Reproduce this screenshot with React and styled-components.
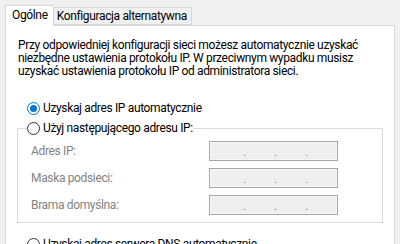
import React from "react";
import styled, { createGlobalStyle } from "styled-components";

const Global = createGlobalStyle`
  html, body { margin: 0; padding: 0; background: #f0f0f0; }
  body { font-family: Roboto, "Noto Sans", sans-serif; font-size: 12px; letter-spacing: -0.35px; color: #000; }
`;

const Dialog = styled.div`
  width: 400px;
  height: 244px;
  overflow: hidden;
  padding: 4px 5px 0 5px;
  box-sizing: border-box;
`;

const TabRow = styled.div`
  display: flex;
  align-items: flex-end;
  height: 21px;
  position: relative;
  z-index: 1;
`;

const Tab = styled.div`
  box-sizing: border-box;
  display: flex;
  align-items: center;
  border: 1px solid #d9d9d9;
  border-bottom: ${(p) => (p.$active ? "none" : "1px solid #d9d9d9")};
  border-left: ${(p) => (p.$first ? "1px solid #d9d9d9" : "none")};
  background: ${(p) => (p.$active ? "#fff" : "#f0f0f0")};
  height: ${(p) => (p.$active ? "21px" : "18px")};
  margin-bottom: ${(p) => (p.$active ? "-1px" : "0")};
  padding: ${(p) => (p.$active ? "0 5px 2px 6px" : "0 4px 0 3px")};
  white-space: nowrap;
`;

const Panel = styled.div`
  background: #fff;
  border: 1px solid #d9d9d9;
  height: 260px;
  padding: 13px 12px 0 12px;
  box-sizing: border-box;
`;

const Intro = styled.p`
  margin: 0;
  line-height: 13px;
  white-space: nowrap;
`;

const RadioRow = styled.label`
  display: flex;
  align-items: center;
  gap: 3px;
  height: 14px;
  line-height: 14px;
  margin: ${(p) => p.$margin || "0"};
  white-space: nowrap;
`;

const RadioCircle = styled.span`
  box-sizing: border-box;
  width: 13px;
  height: 13px;
  border-radius: 50%;
  border: 1px solid ${(p) => (p.$checked ? "#0078d7" : "#333")};
  background: #fff;
  display: flex;
  align-items: center;
  justify-content: center;
  flex: none;
  &::after {
    content: "";
    width: 7px;
    height: 7px;
    border-radius: 50%;
    background: ${(p) => (p.$checked ? "#0078d7" : "transparent")};
  }
`;

const Group = styled.fieldset`
  margin: 6px 0 0 -1px;
  width: 366px;
  box-sizing: border-box;
  border: 1px solid #dcdcdc;
  padding: 6px 12px 7px 13px;
  display: grid;
  grid-template-columns: 178px 129px;
  row-gap: 7px;
  align-items: center;
`;

const Legend = styled.legend`
  padding: 0;
  margin-left: -4px;
  background: #fff;
`;

const FieldLabel = styled.span`
  color: #838383;
  white-space: nowrap;
`;

const IpBox = styled.div`
  box-sizing: border-box;
  height: 20px;
  border: 1px solid #a6a6a6;
  box-shadow: inset 0 0 0 1px #f7f7f7;
  background: #efefef;
  display: grid;
  grid-template-columns: 24px 7px 24px 7px 24px 7px 24px;
  padding-left: 7px;
  align-items: end;
`;

const Dot = styled.span`
  color: #6d6d6d;
  font-size: 10px;
  line-height: 14px;
  text-align: center;
`;

const Seg = styled.span``;

function IpField() {
  return (
    <IpBox>
      <Seg />
      <Dot>.</Dot>
      <Seg />
      <Dot>.</Dot>
      <Seg />
      <Dot>.</Dot>
      <Seg />
    </IpBox>
  );
}

export default function App() {
  return (
    <Dialog>
      <Global />
      <TabRow>
        <Tab $active $first>Ogólne</Tab>
        <Tab>Konfiguracja alternatywna</Tab>
      </TabRow>
      <Panel>
        <Intro>
          Przy odpowiedniej konfiguracji sieci możesz automatycznie uzyskać
          <br />
          niezbędne ustawienia protokołu IP. W przeciwnym wypadku musisz
          <br />
          uzyskać ustawienia protokołu IP od administratora sieci.
        </Intro>
        <RadioRow $margin="23px 0 0 9px">
          <RadioCircle $checked />
          Uzyskaj adres IP automatycznie
        </RadioRow>
        <Group>
          <Legend>
            <RadioRow>
              <RadioCircle />
              Użyj następującego adresu IP:
            </RadioRow>
          </Legend>
          <FieldLabel>Adres IP:</FieldLabel>
          <IpField />
          <FieldLabel>Maska podsieci:</FieldLabel>
          <IpField />
          <FieldLabel>Brama domyślna:</FieldLabel>
          <IpField />
        </Group>
        <RadioRow $margin="14px 0 0 9px">
          <RadioCircle />
          Uzyskaj adres serwera DNS automatycznie
        </RadioRow>
      </Panel>
    </Dialog>
  );
}
